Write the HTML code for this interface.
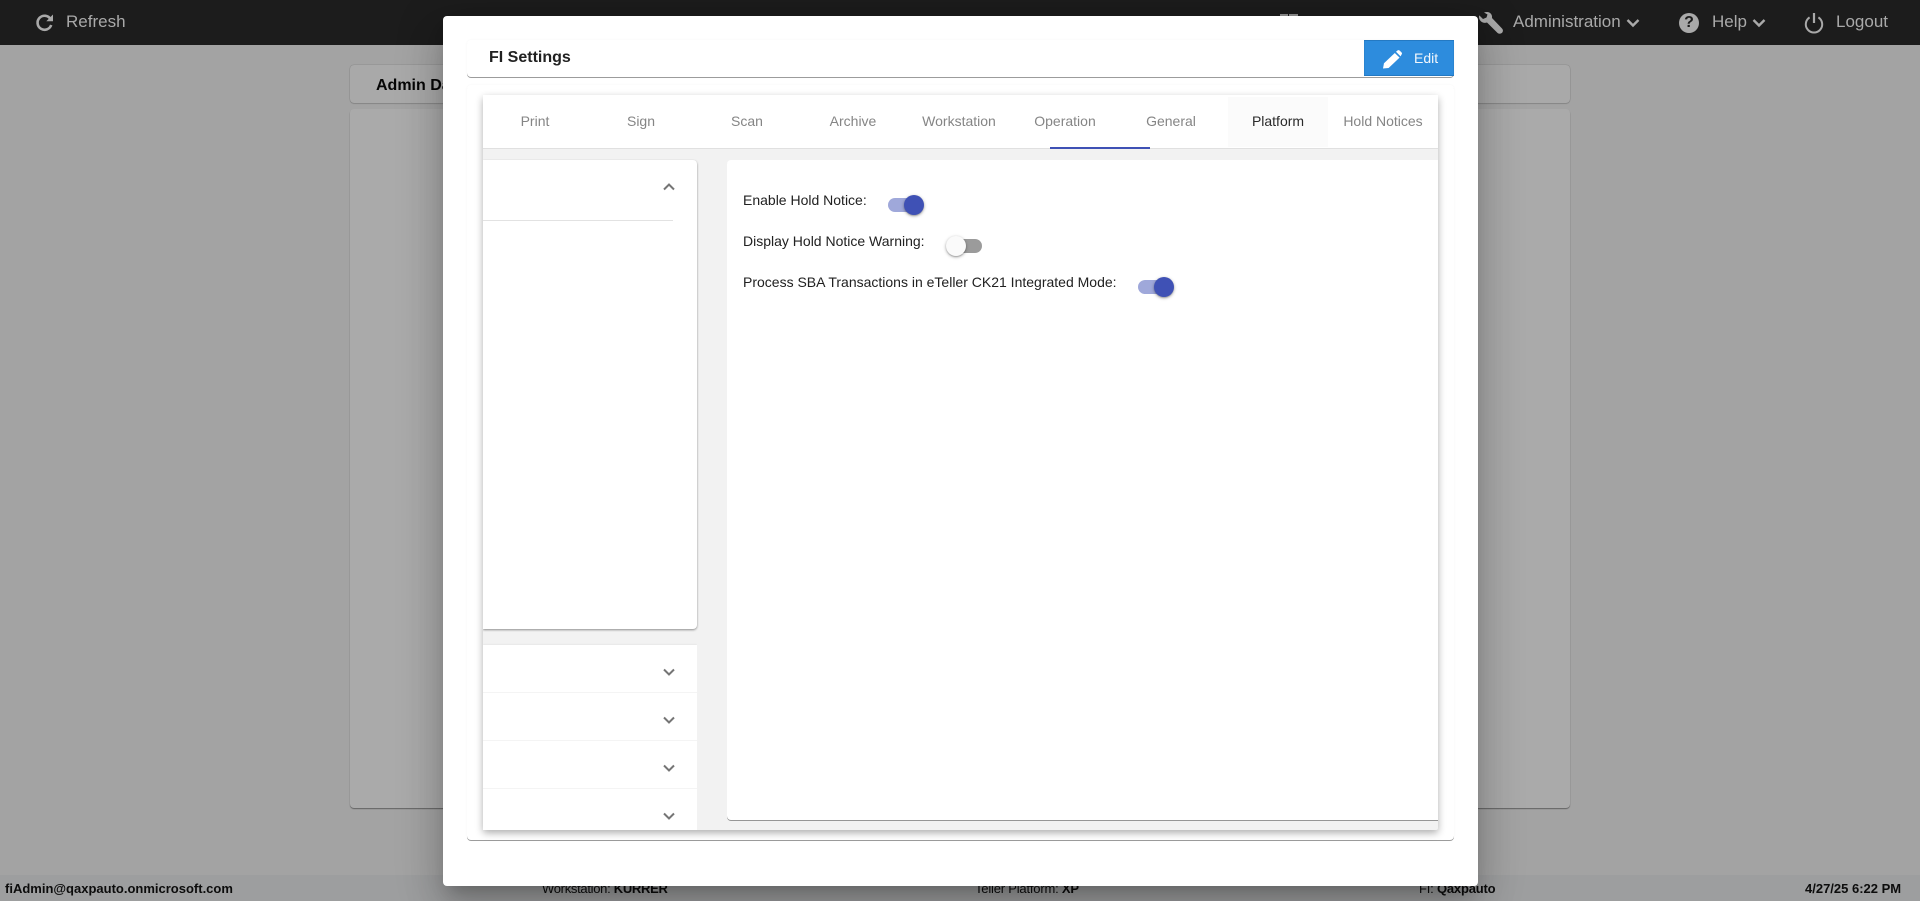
<!DOCTYPE html>
<html>
<head>
<meta charset="utf-8">
<title>FI Settings</title>
<style>
html,body{margin:0;padding:0;width:1920px;height:901px;overflow:hidden;background:#a3a3a3;font-family:"Liberation Sans",Arial,sans-serif}
.a{position:absolute}
.t{position:absolute;white-space:nowrap;line-height:20px}
.hd{color:#a9a9a9;font-size:17px}
.st{color:#0c0c0c;font-size:13px;font-family:"Liberation Sans",Arial,sans-serif;top:879px}
.st b{font-weight:700}
.tab{position:absolute;top:95px;height:54px;width:106px;text-align:center;line-height:52px;font-size:14px;color:#858585}
.lbl{position:absolute;left:743px;font-size:14px;color:#212121;line-height:20px;white-space:nowrap}
.track{position:absolute;width:34px;height:14px;border-radius:7px}
.thumb{position:absolute;width:20px;height:20px;border-radius:50%;box-shadow:0 1px 3px rgba(0,0,0,.35),0 1px 1px rgba(0,0,0,.15)}
.on{background:#9fa8da}.off{background:#9b9b9b}
.ton{background:#3f51b5}.toff{background:#fafafa}
.div{position:absolute;left:483px;width:214px;height:1px;background:#f4f4f4}
svg{position:absolute;overflow:visible}
</style>
</head>
<body>
<!-- header -->
<div class="a" style="left:0;top:0;width:1920px;height:45px;background:#1c1c1c"></div>
<svg style="left:36px;top:13px" width="18" height="18" viewBox="0 0 18 18"><path d="M14.6 6.2A7 7 0 1 0 15.2 12" fill="none" stroke="#a9a9a9" stroke-width="2.6"/><path d="M17 1.5V8.2H10.3Z" fill="#a9a9a9"/></svg>
<div class="t hd" style="left:66px;top:12px">Refresh</div>
<div class="a" style="left:1280px;top:14px;width:8px;height:3px;background:#8e8e8e"></div>
<div class="a" style="left:1289px;top:14px;width:9px;height:3px;background:#8e8e8e"></div>
<svg style="left:1479px;top:12px" width="24" height="22" viewBox="0 0 24 22"><path d="M8 0C11.5 0 13.5 3 13 6L23 16.5C24.5 18 24 20 22.8 21C21.5 22 19.5 22 18.2 20.6L8 10.5C4 12 0 9 0 5C0 4.4.1 3.9.3 3.4L4 7L7.5 5.5L8.5 2.5L5 .5C6 .2 7 0 8 0Z" fill="#a9a9a9"/></svg>
<div class="t hd" style="left:1513px;top:12px">Administration</div>
<svg style="left:1626px;top:18px" width="14" height="10" viewBox="0 0 14 10"><path d="M1.5 2L7 7.5L12.5 2" fill="none" stroke="#a9a9a9" stroke-width="2.4"/></svg>
<div class="a" style="left:1679px;top:13px;width:20px;height:20px;border-radius:50%;background:#a9a9a9;color:#1c1c1c;font-weight:700;font-size:16px;line-height:20px;text-align:center">?</div>
<div class="t hd" style="left:1712px;top:12px">Help</div>
<svg style="left:1752px;top:18px" width="14" height="10" viewBox="0 0 14 10"><path d="M1.5 2L7 7.5L12.5 2" fill="none" stroke="#a9a9a9" stroke-width="2.4"/></svg>
<svg style="left:1804px;top:13px" width="20" height="20" viewBox="0 0 20 20"><path d="M5.6 4.4A8.2 8.2 0 1 0 14.4 4.4" fill="none" stroke="#a9a9a9" stroke-width="2"/><path d="M10 0V10" stroke="#a9a9a9" stroke-width="2.2"/></svg>
<div class="t hd" style="left:1836px;top:12px">Logout</div>

<!-- dimmed page -->
<div class="a" style="left:350px;top:65px;width:1220px;height:38px;background:#a9a9a9;border-radius:4px;box-shadow:0 0 1px rgba(0,0,0,.4),0 1px 1px rgba(0,0,0,.12)"></div>
<div class="t" style="left:376px;top:76px;font-size:16px;font-weight:700;color:#060606">Admin Dashboard</div>
<div class="a" style="left:350px;top:109px;width:1220px;height:699px;background:#aaa;border-radius:4px;box-shadow:0 1px 1px rgba(0,0,0,.4)"></div>
<div class="a" style="left:0;top:875px;width:1920px;height:26px;background:#9d9e9f"></div>
<div class="t st" style="left:5px"><b>fiAdmin@qaxpauto.onmicrosoft.com</b></div>
<div class="t st" style="left:542px;letter-spacing:-.3px">Workstation: <b>KURRER</b></div>
<div class="t st" style="left:975px;letter-spacing:-.2px">Teller Platform: <b>XP</b></div>
<div class="t st" style="left:1419px;letter-spacing:-.2px">FI: <b>Qaxpauto</b></div>
<div class="t st" style="left:1805px"><b>4/27/25 6:22 PM</b></div>

<!-- modal -->
<div class="a" style="left:443px;top:16px;width:1035px;height:870px;background:#fff;border-radius:4px;box-shadow:0 11px 15px -7px rgba(0,0,0,.2),0 24px 38px 3px rgba(0,0,0,.14),0 9px 46px 8px rgba(0,0,0,.12)"></div>

<div class="a" style="left:467px;top:40px;width:987px;height:37px;background:#fff;border-radius:4px;box-shadow:0 1px 0 rgba(0,0,0,.38),0 0 2px rgba(0,0,0,.04)"></div>
<div class="t" style="left:489px;top:48px;font-size:16px;font-weight:700;color:#212121">FI Settings</div>
<div class="a" style="left:1364px;top:40px;width:90px;height:36px;background:#2d8cdd;box-shadow:inset 0 1px 0 #2479c2,inset 0 -1px 0 #2479c2,inset 1px 0 0 #2a84d0,inset -1px 0 0 #2a84d0"></div>
<svg style="left:1383px;top:50px" width="20" height="19" viewBox="0 0 20 19"><path d="M0 18.5L1 13.2L11.8 3L16.6 7.6L5.6 18Z" fill="#fff"/><path d="M13 1.8L14.2 .7C15 0 16 0 16.8 .7L18.4 2.2C19.2 3 19.2 4 18.4 4.8L17.6 6.4Z" fill="#fff"/></svg>
<div class="t" style="left:1414px;top:48px;font-size:14px;color:#f2f7fc">Edit</div>

<div class="a" style="left:467px;top:85px;width:987px;height:755px;background:#fff;border-radius:4px;box-shadow:0 1px 0 rgba(0,0,0,.38),0 0 2px rgba(0,0,0,.04)"></div>

<!-- inner card -->
<div class="a" style="left:483px;top:95px;width:955px;height:735px;background:#f2f2f2;border-radius:2px;box-shadow:0 3px 8px rgba(0,0,0,.32)"></div>
<div class="a" style="left:483px;top:95px;width:955px;height:54px;background:#fff;border-bottom:1px solid #e0e0e0;box-sizing:border-box"></div>
<div class="a" style="left:1228px;top:97px;width:100px;height:50px;background:#fbfbfb"></div>
<div class="tab" style="left:482px">Print</div>
<div class="tab" style="left:588px">Sign</div>
<div class="tab" style="left:694px">Scan</div>
<div class="tab" style="left:800px">Archive</div>
<div class="tab" style="left:906px">Workstation</div>
<div class="tab" style="left:1012px">Operation</div>
<div class="tab" style="left:1118px">General</div>
<div class="tab" style="left:1225px;color:#2a2a2a">Platform</div>
<div class="tab" style="left:1330px">Hold Notices</div>
<div class="a" style="left:1050px;top:147px;width:100px;height:2px;background:#3f51b5"></div>

<!-- left panels -->
<div class="a" style="left:483px;top:160px;width:214px;height:469px;background:#fff;border-radius:0 4px 4px 0;box-shadow:0 1px 2px rgba(0,0,0,.42);clip-path:inset(-5px -5px -5px 0)"></div>
<div class="a" style="left:483px;top:220px;width:190px;height:1px;background:#e2e2e2"></div>
<svg style="left:663px;top:183px" width="12" height="8" viewBox="0 0 12 8"><path d="M1 6.5L6 1.5L11 6.5" fill="none" stroke="#757575" stroke-width="2"/></svg>
<div class="a" style="left:483px;top:645px;width:214px;height:185px;background:#fff;box-shadow:0 -1px 1px rgba(0,0,0,.04);clip-path:inset(-5px 0 0 0)"></div>
<div class="div" style="top:692px"></div>
<div class="div" style="top:740px"></div>
<div class="div" style="top:788px"></div>
<svg style="left:663px;top:668px" width="12" height="8" viewBox="0 0 12 8"><path d="M1 1.5L6 6.5L11 1.5" fill="none" stroke="#757575" stroke-width="2"/></svg>
<svg style="left:663px;top:716px" width="12" height="8" viewBox="0 0 12 8"><path d="M1 1.5L6 6.5L11 1.5" fill="none" stroke="#757575" stroke-width="2"/></svg>
<svg style="left:663px;top:764px" width="12" height="8" viewBox="0 0 12 8"><path d="M1 1.5L6 6.5L11 1.5" fill="none" stroke="#757575" stroke-width="2"/></svg>
<svg style="left:663px;top:812px" width="12" height="8" viewBox="0 0 12 8"><path d="M1 1.5L6 6.5L11 1.5" fill="none" stroke="#757575" stroke-width="2"/></svg>

<!-- right panel -->
<div class="a" style="left:727px;top:160px;width:711px;height:660px;background:#fff;border-radius:4px 0 0 4px;box-shadow:0 1px 0 rgba(0,0,0,.38)"></div>
<div class="lbl" style="top:190px">Enable Hold Notice:</div>
<div class="track on" style="left:888px;top:198px"></div>
<div class="thumb ton" style="left:904px;top:195px"></div>
<div class="lbl" style="top:231px">Display Hold Notice Warning:</div>
<div class="track off" style="left:948px;top:239px"></div>
<div class="thumb toff" style="left:946px;top:236px"></div>
<div class="lbl" style="top:272px">Process SBA Transactions in eTeller CK21 Integrated Mode:</div>
<div class="track on" style="left:1138px;top:280px"></div>
<div class="thumb ton" style="left:1154px;top:277px"></div>
</body>
</html>
